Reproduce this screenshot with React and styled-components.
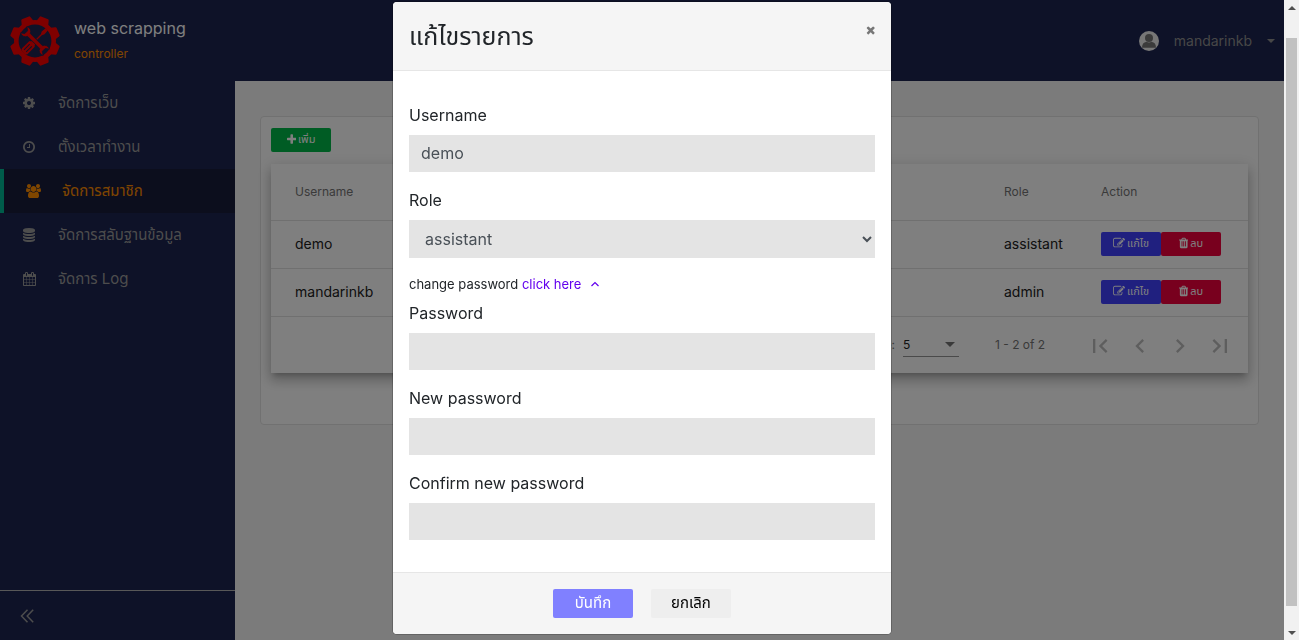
import React, { useState } from 'react';
import styled, { createGlobalStyle, css } from 'styled-components';

const GlobalStyle = createGlobalStyle`
  *, *::before, *::after { box-sizing: border-box; }
  body {
    margin: 0;
    background: #f7f7f7;
    color: #212529;
    font-family: Inter, "Noto Sans", "Noto Sans Thai", sans-serif;
    font-size: 14px;
    line-height: 20px;
  }
  button, input, select { font: inherit; }
`;

/* ---------- icons ---------- */

const PATHS = {
  cog: [1536, 'M1024 896q0-106-75-181t-181-75-181 75-75 181 75 181 181 75 181-75 75-181zm512-109v222q0 12-8 23t-20 13l-185 28q-19 54-39 91 35 50 107 138 10 12 10 25t-9 23q-27 37-99 108t-94 71q-12 0-26-9l-138-108q-44 23-91 38-16 136-29 186-7 28-36 28h-222q-14 0-24.5-8.5t-11.5-21.5l-28-184q-49-16-90-37l-141 107q-10 9-25 9-14 0-25-11-126-114-165-168-7-10-7-23 0-12 8-23 15-21 51-66.5t54-70.5q-27-50-41-99l-183-27q-13-2-21-12.5t-8-23.5v-222q0-12 8-23t19-13l186-28q14-46 39-92-40-57-107-138-10-12-10-24 0-10 9-23 26-36 98.5-107.5t94.5-71.5q13 0 26 10l138 107q44-23 91-38 16-136 29-186 7-28 36-28h222q14 0 24.5 8.5t11.5 21.5l28 184q49 16 90 37l142-107q9-9 24-9 13 0 25 10 129 119 165 170 7 8 7 22 0 12-8 23-15 21-51 66.5t-54 70.5q26 50 41 98l183 28q13 2 21 12.5t8 23.5z'],
  clock: [1536, 'M896 544v448q0 14-9 23t-23 9h-320q-14 0-23-9t-9-23v-64q0-14 9-23t23-9h224v-352q0-14 9-23t23-9h64q14 0 23 9t9 23zm416 352q0-148-73-273t-198-198-273-73-273 73-198 198-73 273 73 273 198 198 273 73 273-73 198-198 73-273zm224 0q0 209-103 385.5t-279.5 279.5-385.5 103-385.5-103-279.5-279.5-103-385.5 103-385.5 279.5-279.5 385.5-103 385.5 103 279.5 279.5 103 385.5z'],
  users: [1920, 'M593 896q-162 5-265 128h-134q-82 0-138-40.5t-56-118.5q0-353 124-353 6 0 43.5 21t97.5 42.5 119 21.5q67 0 133-23-5 37-5 66 0 139 81 256zm1071 637q0 120-73 189.5t-194 69.5h-874q-121 0-194-69.5t-73-189.5q0-53 3.5-103.5t14-109 26.5-108.5 43-97.5 62-81 85.5-53.5 111.5-20q10 0 43 21.5t73 48 107 48 135 21.5 135-21.5 107-48 73-48 43-21.5q61 0 111.5 20t85.5 53.5 62 81 43 97.5 26.5 108.5 14 109 3.5 103.5zm-1024-1277q0 106-75 181t-181 75-181-75-75-181 75-181 181-75 181 75 75 181zm704 384q0 159-112.5 271.5t-271.5 112.5-271.5-112.5-112.5-271.5 112.5-271.5 271.5-112.5 271.5 112.5 112.5 271.5zm576 225q0 78-56 118.5t-138 40.5h-134q-103-123-265-128 81-117 81-256 0-29-5-66 66 23 133 23 59 0 119-21.5t97.5-42.5 43.5-21q124 0 124 353zm-128-609q0 106-75 181t-181 75-181-75-75-181 75-181 181-75 181 75 75 181z'],
  database: [1536, 'M768 768q237 0 443-43t325-127v170q0 69-103 128t-280 93.5-385 34.5-385-34.5-280-93.5-103-128v-170q119 84 325 127t443 43zm0 768q237 0 443-43t325-127v170q0 69-103 128t-280 93.5-385 34.5-385-34.5-280-93.5-103-128v-170q119 84 325 127t443 43zm0-384q237 0 443-43t325-127v170q0 69-103 128t-280 93.5-385 34.5-385-34.5-280-93.5-103-128v-170q119 84 325 127t443 43zm0-1152q208 0 385 34.5t280 93.5 103 128v128q0 69-103 128t-280 93.5-385 34.5-385-34.5-280-93.5-103-128v-128q0-69 103-128t280-93.5 385-34.5z'],
  calendar: [1664, 'M128 1664h288v-288h-288v288zm352 0h320v-288h-320v288zm-352-352h288v-320h-288v320zm352 0h320v-320h-320v320zm-352-384h288v-288h-288v288zm736 736h320v-288h-320v288zm-384-736h320v-288h-320v288zm768 736h288v-288h-288v288zm-384-352h320v-320h-320v320zm-352-864v-288q0-13-9.5-22.5t-22.5-9.5h-64q-13 0-22.5 9.5t-9.5 22.5v288q0 13 9.5 22.5t22.5 9.5h64q13 0 22.5-9.5t9.5-22.5zm736 864h288v-320h-288v320zm-384-384h320v-288h-320v288zm384 0h288v-288h-288v288zm32-480v-288q0-13-9.5-22.5t-22.5-9.5h-64q-13 0-22.5 9.5t-9.5 22.5v288q0 13 9.5 22.5t22.5 9.5h64q13 0 22.5-9.5t9.5-22.5zm384-64v1280q0 52-38 90t-90 38h-1408q-52 0-90-38t-38-90v-1280q0-52 38-90t90-38h128v-96q0-66 47-113t113-47h64q66 0 113 47t47 113v96h384v-96q0-66 47-113t113-47h64q66 0 113 47t47 113v96h128q52 0 90 38t38 90z'],
  plus: [1408, 'M1408 800v192q0 40-28 68t-68 28h-416v416q0 40-28 68t-68 28h-192q-40 0-68-28t-28-68v-416h-416q-40 0-68-28t-28-68v-192q0-40 28-68t68-28h416v-416q0-40 28-68t68-28h192q40 0 68 28t28 68v416h416q40 0 68 28t28 68z'],
  trash: [1408, 'M512 1376v-704q0-14-9-23t-23-9h-64q-14 0-23 9t-9 23v704q0 14 9 23t23 9h64q14 0 23-9t9-23zm256 0v-704q0-14-9-23t-23-9h-64q-14 0-23 9t-9 23v704q0 14 9 23t23 9h64q14 0 23-9t9-23zm256 0v-704q0-14-9-23t-23-9h-64q-14 0-23 9t-9 23v704q0 14 9 23t23 9h64q14 0 23-9t9-23zm-544-992h448l-48-117q-7-9-17-11h-317q-10 2-17 11zm928 32v64q0 14-9 23t-23 9h-96v948q0 83-47 143.5t-113 60.5h-832q-66 0-113-58.5t-47-141.5v-952h-96q-14 0-23-9t-9-23v-64q0-14 9-23t23-9h309l70-167q15-37 54-63t79-26h320q40 0 79 26t54 63l70 167h309q14 0 23 9t9 23z'],
  edit: [1792, 'M888 1184l116-116-152-152-116 116v56h96v96h56zm440-720q-16-16-33 1l-350 350q-17 17-1 33t33-1l350-350q17-17 1-33zm80 594v190q0 119-84.5 203.5t-203.5 84.5h-832q-119 0-203.5-84.5t-84.5-203.5v-832q0-119 84.5-203.5t203.5-84.5h832q63 0 117 25 15 7 18 23 3 17-9 29l-49 49q-14 14-32 8-23-6-45-6h-832q-66 0-113 47t-47 113v832q0 66 47 113t113 47h832q66 0 113-47t47-113v-126q0-13 9-22l64-64q15-15 35-7t20 29zm-96-738l288 288-672 672h-288v-288zm444 132l-92 92-288-288 92-92q28-28 68-28t68 28l152 152q28 28 28 68t-28 68z'],
  times: [1408, 'M1298 1322q0 40-28 68l-136 136q-28 28-68 28t-68-28l-294-294-294 294q-28 28-68 28t-68-28l-136-136q-28-28-28-68t28-68l294-294-294-294q-28-28-28-68t28-68l136-136q28-28 68-28t68 28l294 294 294-294q28-28 68-28t68 28l136 136q28 28 28 68t-28 68l-294 294 294 294q28 28 28 68z'],
  first: [24, 'M18.41 16.59L13.82 12l4.59-4.59L17 6l-6 6 6 6zM6 6h2v12H6z'],
  prev: [24, 'M15.41 7.41L14 6l-6 6 6 6 1.41-1.41L10.83 12z'],
  next: [24, 'M10 6L8.59 7.41 13.17 12l-4.58 4.59L10 18l6-6z'],
  last: [24, 'M5.59 7.41L10.18 12l-4.59 4.59L7 18l6-6-6-6zM16 6h2v12h-2z'],
};

const Svg = styled.svg`
  display: block;
  flex: none;
  fill: currentColor;
`;

function Icon({ name, size = 14 }) {
  const [w, d] = PATHS[name];
  const h = w === 24 ? 24 : 1792;
  return (
    <Svg height={size} width={(size * w) / h} viewBox={`0 0 ${w} ${h}`} aria-hidden="true">
      <path d={d} />
    </Svg>
  );
}

function Logo() {
  return (
    <Svg width="50" height="50" viewBox="-25 -25 50 50" aria-hidden="true">
      <g fill="#f00">
        <circle r="18.7" fill="none" stroke="#f00" strokeWidth="4.6" />
        {[0, 1, 2, 3, 4, 5, 6, 7].map((i) => (
          <path key={i} transform={`rotate(${22.5 + i * 45})`} d="M-6.4 -19l1.6 -5.2q.3 -.8 1 -.8h7.6q.7 0 1 .8l1.6 5.2z" />
        ))}
        <g transform="rotate(45)">
          <path d="M-.7 -10h1.4v13h-1.4zM-1.5 -16.500h3l.5 5l-1.300 2.500h-1.400l-1.300 -2.500z" />
          <path d="M-2.500 1h5v2h-5zM-4 5q0 -2 2 -2h4q2 0 2 2v9q0 2.500 -2.500 2.500h-3q-2.500 0 -2.500 -2.500z" />
          <path fill="#1c2450" d="M-2 6h1v8h-1zM1 6h1v8h-1z" />
        </g>
        <path
          transform="rotate(-45)"
          stroke="#1c2450"
          strokeWidth=".8"
          d="M-2 -8.500a5.200 5.200 0 0 1 -2.500 -7.500l2.500 3.500h4l2.500 -3.500a5.200 5.200 0 0 1 -2.500 7.500v17a5.200 5.200 0 0 1 2.500 7.500l-2.500 -3.500h-4l-2.500 3.500a5.200 5.200 0 0 1 2.500 -7.500z"
        />
      </g>
    </Svg>
  );
}

/* ---------- page frame ---------- */

const Screen = styled.div`
  display: flex;
  min-height: 100vh;
`;

const AppFrame = styled.div`
  display: flex;
  flex: 1;
  flex-direction: column;
  min-width: 0;
`;

const TopBar = styled.header`
  display: flex;
  align-items: center;
  justify-content: space-between;
  height: 81px;
  padding: 0 9px 0 10px;
  background: #1c2450;
`;

const Brand = styled.a`
  display: flex;
  align-items: center;
  gap: 14px;
  color: #fff;
  text-decoration: none;
`;

const BrandName = styled.div`
  font-size: 16px;
  line-height: 24px;
`;

const BrandSub = styled.div`
  padding-top: 2px;
  color: #ff8c00;
  font-size: 12px;
  line-height: 24px;
`;

const UserButton = styled.button`
  display: flex;
  align-items: center;
  gap: 15px;
  padding: 0;
  border: 0;
  background: none;
  color: #8f8f8f;
  font-size: 14px;
`;

const Caret = styled.span`
  border: 4px solid transparent;
  border-top-color: currentColor;
  border-bottom: 0;
`;

const Columns = styled.div`
  display: flex;
  flex: 1;
`;

const SideNav = styled.nav`
  display: flex;
  flex-direction: column;
  flex: none;
  width: 235px;
  background: #1c2450;
  color: #9a9a9a;
`;

const NavItem = styled.a`
  display: flex;
  align-items: center;
  gap: 22px;
  height: 44px;
  padding-left: 22px;
  color: inherit;
  font-size: 15px;
  text-decoration: none;
  ${(p) => p.$active && css`
    border-left: 4px solid #00b894;
    background: #181c3a;
    color: #ff8c00;
  `}
`;

const NavIcon = styled.span`
  display: flex;
  justify-content: center;
  width: 14px;
`;

const CollapseButton = styled.button`
  display: flex;
  align-items: center;
  height: 50px;
  margin-top: auto;
  padding: 0 20px;
  border: 0;
  border-top: 1px solid #b0b0b0;
  background: none;
  color: #9a9a9a;
`;

const Main = styled.main`
  flex: 1;
  min-width: 0;
  padding: 35px 25px;
`;

const Card = styled.section`
  padding: 11px 10px 51px;
  border: 1px solid #e2e2e2;
  border-radius: 4px;
  background: #fff;
`;

const SmallButton = styled.button`
  display: inline-flex;
  align-items: center;
  justify-content: center;
  gap: 2px;
  width: 60px;
  height: 24px;
  padding: 0 0 2px;
  border: 0;
  border-radius: 2px;
  background: ${(p) => p.$bg};
  color: #fff;
  font-size: 11px;
  line-height: 16px;
`;

const Paper = styled.div`
  margin-top: 12px;
  background: #fff;
  box-shadow: 0 5px 5px -3px rgba(0, 0, 0, 0.2), 0 8px 10px 1px rgba(0, 0, 0, 0.14), 0 3px 14px 2px rgba(0, 0, 0, 0.12);
`;

const Table = styled.table`
  width: 100%;
  border-collapse: separate;
  border-spacing: 0;
  table-layout: fixed;
`;

const Th = styled.th`
  width: ${(p) => p.$width};
  height: 57px;
  padding: 0 0 0 ${(p) => p.$indent || '0'};
  border-bottom: 1px solid #e0e0e0;
  color: #757575;
  font-size: 12px;
  font-weight: 400;
  text-align: left;
`;

const Td = styled.td`
  height: 48px;
  padding: 0 0 1px ${(p) => p.$indent || '0'};
  border-bottom: 1px solid #e0e0e0;
  color: #212121;
`;

const Actions = styled.div`
  display: flex;
`;

const Pager = styled.div`
  display: flex;
  align-items: center;
  justify-content: flex-end;
  height: 56px;
  padding-right: 8px;
  color: #757575;
  font-size: 12px;
`;

const PageSize = styled.label`
  display: flex;
  align-items: center;
  gap: 8px;
`;

const SizeBox = styled.span`
  display: grid;
  align-items: center;
  width: 56px;
  height: 24px;
  border-bottom: 1px solid #949494;
`;

const SizeSelect = styled.select`
  grid-area: 1 / 1;
  width: 100%;
  padding: 0;
  border: 0;
  background: none;
  color: #212121;
  appearance: none;
`;

const SizeArrow = styled.span`
  grid-area: 1 / 1;
  justify-self: end;
  margin-right: 4px;
  border: 5px solid transparent;
  border-top-color: #757575;
  border-bottom: 0;
  pointer-events: none;
`;

const Range = styled.span`
  width: 53px;
  margin: 0 32px 0 36px;
  white-space: nowrap;
`;

const PageButton = styled.button`
  display: flex;
  align-items: center;
  justify-content: center;
  width: 40px;
  height: 40px;
  padding: 2px 0 0;
  border: 0;
  background: none;
  color: #bdbdbd;
`;

/* ---------- scroll bar of the window ---------- */

const ScrollRail = styled.div`
  display: flex;
  flex-direction: column;
  align-items: center;
  flex: none;
  width: 15px;
  padding: 6px 0 5px;
  background: #f1f1f1;
`;

const RailArrow = styled.span`
  border: 4px solid transparent;
  ${(p) => (p.$up ? 'border-bottom-color: #505050; border-top: 0;' : 'border-top-color: #505050; border-bottom: 0;')}
`;

const RailThumb = styled.span`
  flex: 1;
  width: 11px;
  margin: 28px 0 25px;
  background: #c1c1c1;
`;

/* ---------- dialog ---------- */

const Backdrop = styled.div`
  position: fixed;
  inset: 0 15px 0 0;
  display: flex;
  align-items: flex-start;
  justify-content: center;
  padding-top: 1px;
  background: rgba(0, 0, 0, 0.5);
`;

const Dialog = styled.form`
  width: 500px;
  max-width: 100%;
  border: 1px solid rgba(0, 0, 0, 0.2);
  border-radius: 5px;
  background: #fff;
  background-clip: padding-box;
  overflow: hidden;
`;

const DialogHead = styled.div`
  display: flex;
  align-items: flex-start;
  justify-content: space-between;
  padding: 16px;
  border-bottom: 1px solid #e6e6e6;
  background: #f5f5f5;
`;

const DialogTitle = styled.h2`
  margin: 0;
  font-size: 25px;
  font-weight: 400;
  line-height: 36px;
`;

const CloseButton = styled.button`
  padding: 6px 0;
  border: 0;
  background: none;
  color: #777;
`;

const DialogBody = styled.div`
  padding: 32px 16px 16px;
`;

const Field = styled.div`
  margin-bottom: 16px;
`;

const Label = styled.label`
  display: block;
  margin-bottom: 8px;
  font-size: 16px;
  line-height: 24px;
`;

const control = css`
  display: block;
  width: 100%;
  border: 0;
  border-radius: 0;
  background: #e4e4e4;
  color: #495057;
  font-size: 16px;
  line-height: 24px;
`;

const TextInput = styled.input`
  ${control}
  height: 37px;
  padding: 0 12px 2px;
`;

const RoleSelect = styled.select`
  ${control}
  height: 38px;
  padding: 0 12px;
`;

const ChangeRow = styled.p`
  margin: 0 0 7px;
  font-size: 13px;
`;

const ToggleLink = styled.a`
  display: inline-flex;
  align-items: center;
  gap: 10px;
  color: #6200ee;
  text-decoration: none;
`;

const DialogFoot = styled.div`
  display: flex;
  justify-content: center;
  gap: 18px;
  padding: 16px;
  border-top: 1px solid #e6e6e6;
  background: #f5f5f5;
`;

const FootButton = styled.button`
  width: 80px;
  height: 29px;
  padding: 0 0 2px;
  border: 0;
  border-radius: 2px;
  background: ${(p) => (p.$primary ? '#8080ff' : '#eee')};
  color: ${(p) => (p.$primary ? '#fff' : '#000')};
  font-size: 15px;
`;

const NAV = [
  ['cog', 'จัดการเว็บ'],
  ['clock', 'ตั้งเวลาทำงาน'],
  ['users', 'จัดการสมาชิก'],
  ['database', 'จัดการสลับฐานข้อมูล'],
  ['calendar', 'จัดการ Log'],
];

const MEMBERS = [
  ['demo', 'assistant'],
  ['mandarinkb', 'admin'],
];

const PAGES = [
  ['first', 'First page'],
  ['prev', 'Previous page'],
  ['next', 'Next page'],
  ['last', 'Last page'],
];

const SECRETS = [
  ['password', 'Password'],
  ['new-password', 'New password'],
  ['confirm-password', 'Confirm new password'],
];

export default function App() {
  const [username, setUsername] = useState('demo');
  return (
    <>
      <GlobalStyle />
      <Screen>
        <AppFrame>
          <TopBar>
            <Brand href="#home">
              <Logo />
              <div>
                <BrandName>web scrapping</BrandName>
                <BrandSub>controller</BrandSub>
              </div>
            </Brand>
            <UserButton type="button">
              <Svg width="20" height="20" viewBox="0 0 20 20" aria-hidden="true">
                <circle cx="10" cy="10" r="10" fill="#eee" />
                <circle cx="10" cy="7" r="4" fill="#777" />
                <path fill="#777" d="M3 16.800q0 -5.300 4.500 -6q2.500 1.400 5 0q4.500 .7 4.500 6z" />
              </Svg>
              mandarinkb
              <Caret />
            </UserButton>
          </TopBar>
          <Columns>
            <SideNav>
              {NAV.map(([icon, text]) => (
                <NavItem key={icon} href={`#${icon}`} $active={icon === 'users'}>
                  <NavIcon><Icon name={icon} /></NavIcon>
                  {text}
                </NavItem>
              ))}
              <CollapseButton type="button" aria-label="Collapse menu">
                <Svg width="14" height="14" viewBox="0 0 14 14" aria-hidden="true">
                  <path fill="none" stroke="currentColor" strokeWidth="1.500" d="M7.500 .8L1.500 7l6 6.200M13.200 .8L7.200 7l6 6.200" />
                </Svg>
              </CollapseButton>
            </SideNav>
            <Main>
              <Card>
                <SmallButton type="button" $bg="#00b848"><Icon name="plus" size={12} />เพิ่ม</SmallButton>
                <Paper>
                  <Table>
                    <thead>
                      <tr>
                        <Th $indent="24px">Username</Th>
                        <Th $width="97px">Role</Th>
                        <Th $width="147px">Action</Th>
                      </tr>
                    </thead>
                    <tbody>
                      {MEMBERS.map(([name, role]) => (
                        <tr key={name}>
                          <Td $indent="24px">{name}</Td>
                          <Td>{role}</Td>
                          <Td>
                            <Actions>
                              <SmallButton type="button" $bg="#4040ff"><Icon name="edit" size={12} />แก้ไข</SmallButton>
                              <SmallButton type="button" $bg="#f0003c"><Icon name="trash" size={12} />ลบ</SmallButton>
                            </Actions>
                          </Td>
                        </tr>
                      ))}
                    </tbody>
                  </Table>
                  <Pager>
                    <PageSize>
                      Items per page:
                      <SizeBox>
                        <SizeSelect defaultValue="5">
                          <option>5</option>
                          <option>10</option>
                        </SizeSelect>
                        <SizeArrow />
                      </SizeBox>
                    </PageSize>
                    <Range>1 - 2 of 2</Range>
                    {PAGES.map(([icon, label]) => (
                      <PageButton key={icon} type="button" aria-label={label}><Icon name={icon} size={28} /></PageButton>
                    ))}
                  </Pager>
                </Paper>
              </Card>
            </Main>
          </Columns>
        </AppFrame>
        <ScrollRail aria-hidden="true">
          <RailArrow $up />
          <RailThumb />
          <RailArrow />
        </ScrollRail>
      </Screen>

      <Backdrop>
        <Dialog role="dialog" aria-labelledby="dialog-title">
          <DialogHead>
            <DialogTitle id="dialog-title">แก้ไขรายการ</DialogTitle>
            <CloseButton type="button" aria-label="Close"><Icon name="times" size={12} /></CloseButton>
          </DialogHead>
          <DialogBody>
            <Field>
              <Label htmlFor="username">Username</Label>
              <TextInput id="username" value={username} onChange={(e) => setUsername(e.target.value)} />
            </Field>
            <Field>
              <Label htmlFor="role">Role</Label>
              <RoleSelect id="role" defaultValue="assistant">
                <option>assistant</option>
                <option>admin</option>
              </RoleSelect>
            </Field>
            <ChangeRow>
              change password{' '}
              <ToggleLink href="#change">
                click here
                <Svg width="8" height="6" viewBox="0 0 8 6" aria-hidden="true">
                  <path fill="none" stroke="currentColor" strokeWidth="1.200" d="M.5 5L4 1.500L7.500 5" />
                </Svg>
              </ToggleLink>
            </ChangeRow>
            {SECRETS.map(([id, label]) => (
              <Field key={id}>
                <Label htmlFor={id}>{label}</Label>
                <TextInput id={id} type="password" />
              </Field>
            ))}
          </DialogBody>
          <DialogFoot>
            <FootButton type="submit" $primary>บันทึก</FootButton>
            <FootButton type="button">ยกเลิก</FootButton>
          </DialogFoot>
        </Dialog>
      </Backdrop>
    </>
  );
}
